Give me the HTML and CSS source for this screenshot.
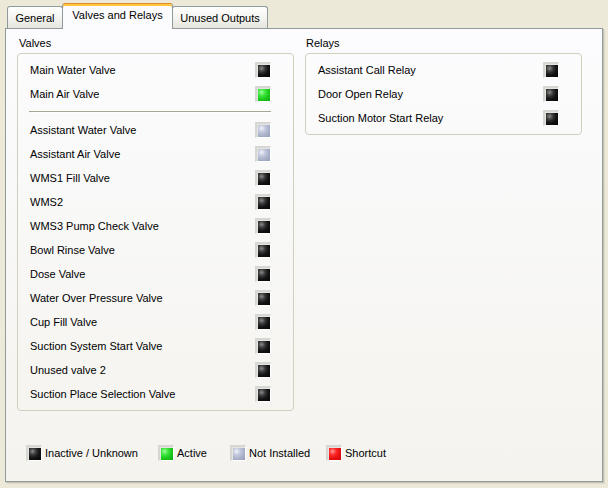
FILE: index.html
```html
<!DOCTYPE html>
<html>
<head>
<meta charset="utf-8">
<link rel="stylesheet" href="styles.css">
</head>
<body>
<div class="window">
  <div class="tabs">
    <div class="tab tab-general">General</div>
    <div class="tab tab-active">Valves and Relays</div>
    <div class="tab tab-unused">Unused Outputs</div>
  </div>
  <div class="panel">
    <div class="columns">
      <div class="group">
        <div class="group-label">Valves</div>
        <div class="group-box">
          <div class="row"><span>Main Water Valve</span><i class="led off"></i></div>
          <div class="row"><span>Main Air Valve</span><i class="led on"></i></div>
          <div class="sep"></div>
          <div class="row"><span>Assistant Water Valve</span><i class="led na"></i></div>
          <div class="row"><span>Assistant Air Valve</span><i class="led na"></i></div>
          <div class="row"><span>WMS1 Fill Valve</span><i class="led off"></i></div>
          <div class="row"><span>WMS2</span><i class="led off"></i></div>
          <div class="row"><span>WMS3 Pump Check Valve</span><i class="led off"></i></div>
          <div class="row"><span>Bowl Rinse Valve</span><i class="led off"></i></div>
          <div class="row"><span>Dose Valve</span><i class="led off"></i></div>
          <div class="row"><span>Water Over Pressure Valve</span><i class="led off"></i></div>
          <div class="row"><span>Cup Fill Valve</span><i class="led off"></i></div>
          <div class="row"><span>Suction System Start Valve</span><i class="led off"></i></div>
          <div class="row"><span>Unused valve 2</span><i class="led off"></i></div>
          <div class="row"><span>Suction Place Selection Valve</span><i class="led off"></i></div>
        </div>
      </div>
      <div class="group">
        <div class="group-label relays-label">Relays</div>
        <div class="group-box">
          <div class="row"><span>Assistant Call Relay</span><i class="led off"></i></div>
          <div class="row"><span>Door Open Relay</span><i class="led off"></i></div>
          <div class="row"><span>Suction Motor Start Relay</span><i class="led off"></i></div>
        </div>
      </div>
    </div>
    <div class="legend">
      <div class="legend-item"><i class="led off"></i><span>Inactive / Unknown</span></div>
      <div class="legend-item"><i class="led on"></i><span>Active</span></div>
      <div class="legend-item"><i class="led na"></i><span>Not Installed</span></div>
      <div class="legend-item"><i class="led short"></i><span>Shortcut</span></div>
    </div>
  </div>
</div>
</body>
</html>
```

FILE: styles.css
```css
* { box-sizing: border-box; }
html, body {
  margin: 0;
  padding: 0;
  width: 608px;
  height: 488px;
  background: #ECE9D8;
  font-family: "Liberation Sans", Arial, sans-serif;
  font-size: 11px;
  color: #000;
  overflow: hidden;
}
.window {
  padding: 3px 0 0 5px;
}
.tabs {
  display: flex;
  align-items: flex-end;
  height: 25px;
  padding-left: 2px;
  position: relative;
  z-index: 1;
}
.tab {
  height: 22px;
  border: 1px solid #919B9C;
  border-bottom: none;
  border-radius: 3px 3px 0 0;
  background: linear-gradient(#FFFFFF, #F3F3EF 55%, #E6E5DE);
  display: flex;
  align-items: center;
  justify-content: center;
  padding-top: 1px;
}
.tab-general { width: 56px; }
.tab-active {
  width: 111px;
  height: 26px;
  margin-bottom: -1px;
  margin-left: -1px;
  background: #FCFCFE;
  border-top: 1px solid #E68B2C;
  box-shadow: inset 0 2px 0 #FFC83C;
  padding-top: 0;
  padding-bottom: 4px;
}
.tab-unused { width: 96px; margin-left: -1px; }
.panel {
  width: 598px;
  height: 454px;
  border: 1px solid #919B9C;
  background: linear-gradient(#FCFCFE, #F4F3EE);
  box-shadow: 1px 1px 0 #C5C2B2, 2px 2px 0 #DDDACB;
  padding: 8px 0 0 11px;
  display: flex;
  flex-direction: column;
}
.columns {
  display: flex;
  align-items: flex-start;
  gap: 11px;
}
.group {
  width: 277px;
  display: flex;
  flex-direction: column;
}
.group-label {
  height: 13px;
  line-height: 13px;
  margin: 0 0 3px 2px;
}
.relays-label { margin-left: 1px; }
.group-box {
  border: 1px solid #D0D0BF;
  border-radius: 4px;
  padding: 4px 0;
}
.row {
  height: 24px;
  display: flex;
  align-items: center;
  justify-content: space-between;
  padding: 0 22px 0 12px;
}
.sep {
  height: 2px;
  margin: 5px 22px 5px 11px;
  border-top: 1px solid #A7A693;
  border-bottom: 1px solid #FFFFFF;
}
.led {
  display: block;
  width: 16px;
  height: 16px;
  flex: none;
  border-style: solid;
  border-width: 2px 1px 1px 2px;
  border-color: #D6D6D2 #FFFFFF #FFFFFF #D6D6D2;
  box-shadow: inset 1px 1px 0 #E4E4E0;
  position: relative;
}
.led::after {
  content: "";
  position: absolute;
  left: 1px;
  top: 1px;
  width: 12px;
  height: 12px;
}
.led.off::after {
  background: radial-gradient(circle at 30% 28%, #8a8a8a 0, #3a3a3a 28%, #141414 55%, #050505 100%);
}
.led.on::after {
  background: radial-gradient(circle at 30% 28%, #9cff9c 0, #3ce43c 30%, #1cc81c 60%, #0fa80f 100%);
}
.led.na::after {
  background: radial-gradient(circle at 30% 28%, #f2f4fb 0, #c3c9dd 30%, #a7afc8 65%, #939cb7 100%);
}
.led.short::after {
  background: radial-gradient(circle at 30% 28%, #ff9a9a 0, #ff2a2a 30%, #e81010 60%, #c80808 100%);
}
.legend {
  display: grid;
  grid-template-columns: 132px 72px 96px auto;
  margin: 34px 0 0 9px;
}
.legend-item {
  display: flex;
  align-items: center;
  gap: 3px;
  height: 16px;
}
```
